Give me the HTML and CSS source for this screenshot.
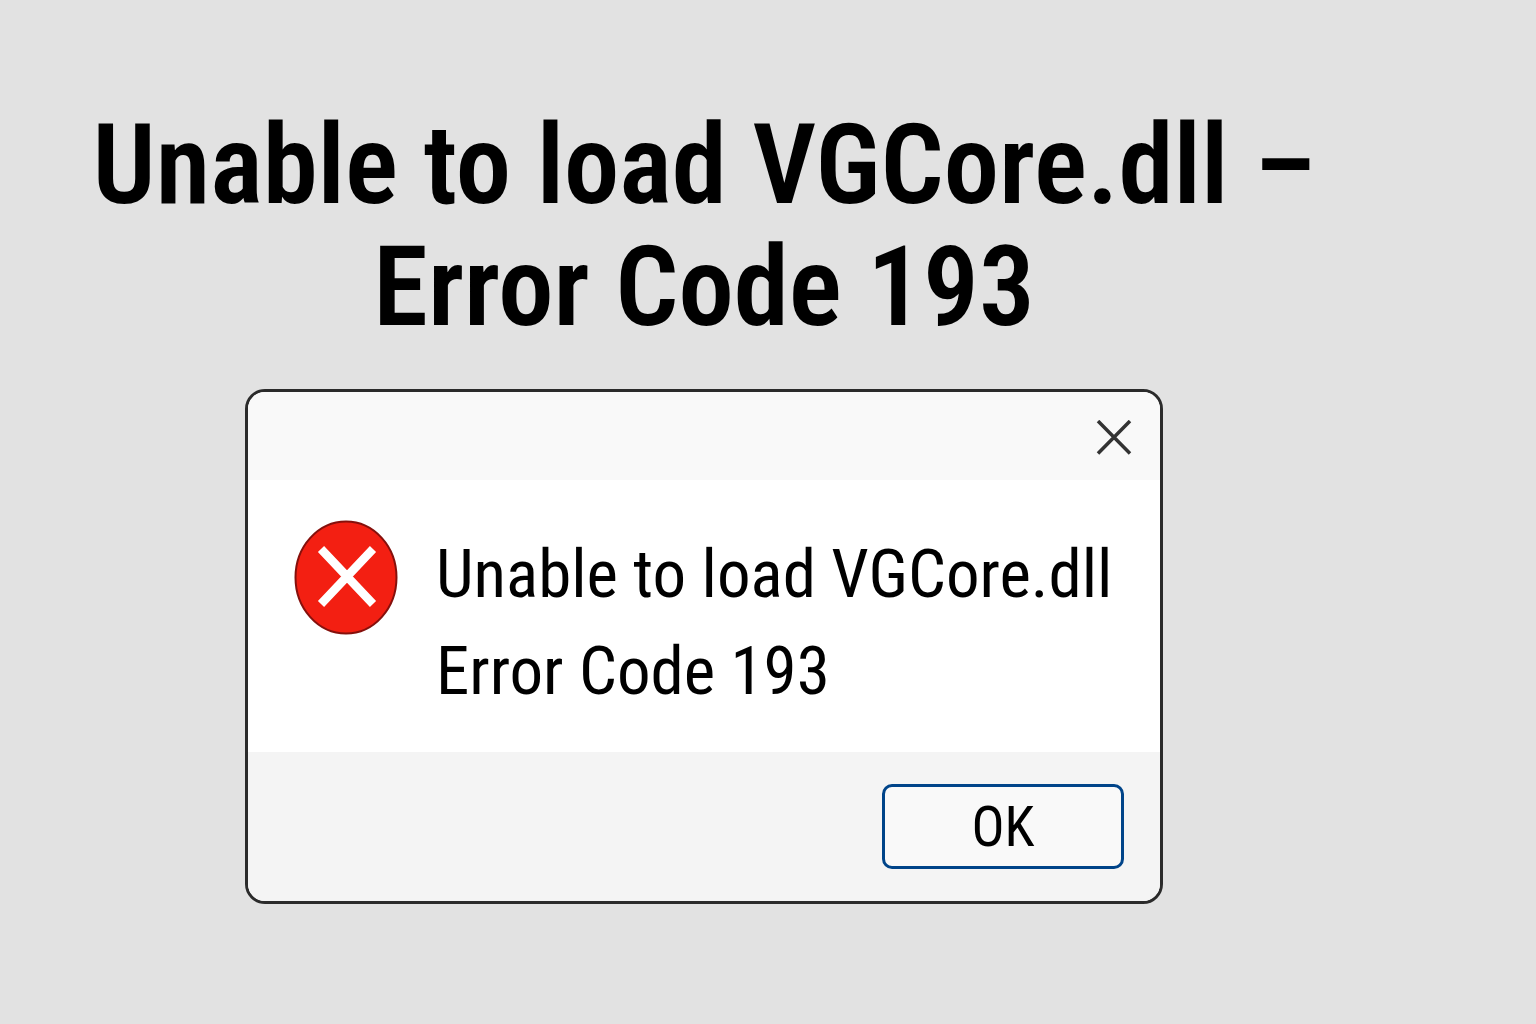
FILE: index.html
```html
<!DOCTYPE html>
<html lang="en">
  <head>
    <meta charset="utf-8">
    <title>Unable to load VGCore.dll – Error Code 193</title>
    <meta name="viewport" content="width=device-width, initial-scale=1">
    <link rel="stylesheet" href="styles.css">
  </head>
  <body>
    <main class="page">
      <h1 class="title">
        Unable to load VGCore.dll –<br>
        Error Code 193
      </h1>
      <section class="dialog" role="alertdialog" aria-label="Error" aria-describedby="message">
        <header class="dialog-header">
          <button type="button" class="close" aria-label="Close">
            <svg width="36" height="36" viewBox="0 0 36 36" fill="none" stroke="#333" stroke-width="3.5">
              <path d="M2 1 34 33.5M34 1 2 33.5"/>
            </svg>
          </button>
        </header>
        <div class="dialog-body">
          <svg class="error-icon" width="104" height="116" viewBox="0 0 104 116">
            <ellipse cx="52" cy="57.5" rx="50.5" ry="56" fill="#f31f12" stroke="#85100c" stroke-width="2"/>
            <path d="M27 29 79 84M79 29 27 84" fill="none" stroke="#fff" stroke-width="8.5"/>
          </svg>
          <div class="message" id="message">
            <p>Unable to load VGCore.dll</p>
            <p>Error Code 193</p>
          </div>
        </div>
        <footer class="dialog-footer">
          <button type="button" class="ok">OK</button>
        </footer>
      </section>
    </main>
  </body>
</html>
```
FILE: styles.css
```css
*, *:before, *:after {
  box-sizing: border-box;
}

body {
  margin: 0;
  background-color: #e2e2e2;
  font-family: "Roboto Condensed", Roboto, sans-serif;
  color: #000;
}

.page {
  display: flex;
  flex-direction: column;
  align-items: center;
  min-height: 100vh;
  padding: 104px 128px 120px 0;
}

.title {
  margin: 0 0 41px;
  font-size: 111px;
  line-height: 122px;
  font-weight: 600;
  text-align: center;
  white-space: nowrap;
}

.dialog {
  width: 100%;
  max-width: 918px;
  overflow: hidden;
  border: 3px solid #2b2b2b;
  border-radius: 20px;
  background-color: #fff;
}

.dialog-header {
  display: flex;
  justify-content: flex-end;
  padding: 20px 20px 16px;
  background-color: #f9f9f9;
}

.close {
  display: flex;
  padding: 8px;
  border: 0;
  background: none;
}

.dialog-body {
  display: flex;
  align-items: flex-start;
  gap: 38px;
  padding: 40px 46px 32px;
}

.error-icon {
  flex: none;
}

.message {
  padding-top: 6px;
  font-size: 67px;
  line-height: 97px;
  white-space: nowrap;
}

.message p {
  margin: 0;
}

.dialog-footer {
  display: flex;
  justify-content: flex-end;
  padding: 32px 36px;
  background-color: #f4f4f4;
}

.ok {
  width: 242px;
  height: 85px;
  padding: 0;
  border: 3px solid #004489;
  border-radius: 10px;
  background-color: #f9f9f9;
  font-family: inherit;
  font-size: 55px;
  color: inherit;
}
```
